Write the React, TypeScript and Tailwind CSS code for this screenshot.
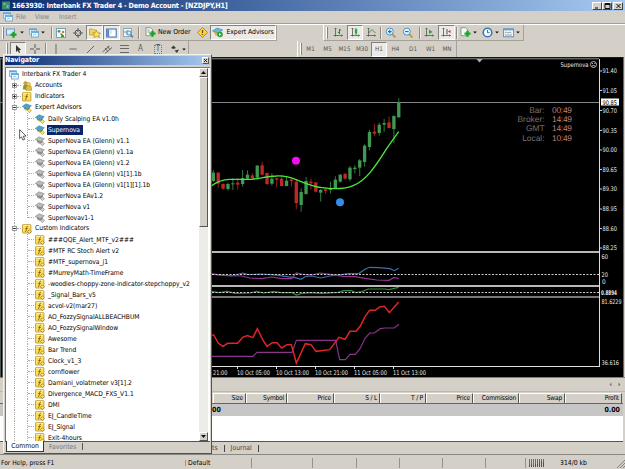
import type { ReactNode } from "react";

type TreeIcon = "app" | "accounts" | "indicator" | "expert" | "expertOff" | "custom";
type Candle = [high: number, top: number, bottom: number, low: number, up: 0 | 1];

const experts = [
  "Daily Scalping EA v1.0h",
  "Supernova",
  "SuperNova EA (Glenn) v1.1",
  "SuperNova EA (Glenn) v1.1a",
  "SuperNova EA (Glenn) v1.2",
  "SuperNova EA (Glenn) v1[1].1b",
  "SuperNova EA (Glenn) v1[1][1].1b",
  "SuperNova EAv1.2",
  "SuperNova v1",
  "SuperNovav1-1",
];

const customIndicators = [
  "###QQE_Alert_MTF_v2###",
  "#MTF RC Stoch Alert v2",
  "#MTF_supernova_j1",
  "#MurreyMath-TimeFrame",
  "-woodies-choppy-zone-indicator-stepchoppy_v2",
  "_Signal_Bars_v5",
  "acvol-v2(mar27)",
  "AO_FozzySignalALLBEACHBUM",
  "AO_FozzySignalWindow",
  "Awesome",
  "Bar Trend",
  "Clock_v1_3",
  "cornflower",
  "Damiani_volatmeter v3[1].2",
  "Divergence_MACD_FXS_V1.1",
  "DMI",
  "EJ_CandleTime",
  "EJ_Signal",
  "Exit-4hours",
];

// Three units per pixel, relative to the price pane.
const candles: Candle[] = [
  [240, 248, 273, 276, 1], [246, 248, 281, 294, 0], [280, 282, 296, 299, 0], [278, 282, 297, 302, 1],
  [264, 280, 283, 300, 1], [264, 278, 284, 299, 0], [240, 264, 282, 290, 1], [241, 254, 266, 270, 1],
  [249, 256, 264, 266, 0], [225, 227, 263, 265, 1], [215, 226, 254, 256, 0], [248, 249, 282, 286, 0],
  [250, 266, 281, 287, 1], [263, 265, 269, 292, 0], [254, 266, 288, 289, 0], [261, 272, 288, 289, 1],
  [263, 269, 273, 290, 0], [270, 275, 339, 358, 0], [295, 306, 345, 365, 1], [261, 273, 312, 314, 1],
  [266, 275, 280, 299, 0], [276, 277, 305, 307, 0], [297, 300, 308, 335, 1], [293, 298, 303, 312, 0],
  [275, 295, 300, 310, 1], [259, 269, 295, 296, 1], [253, 254, 275, 278, 1], [248, 252, 266, 269, 0],
  [228, 233, 268, 274, 1], [226, 233, 237, 250, 1], [207, 211, 233, 258, 1], [163, 167, 216, 230, 1],
  [119, 126, 171, 181, 1], [102, 125, 131, 138, 0], [98, 104, 129, 137, 1], [87, 99, 104, 126, 1],
  [80, 97, 114, 115, 0], [76, 78, 117, 160, 1], [25, 36, 82, 83, 1],
];

const prices: [string, number][] = [
  ["91.40", 70.5], ["91.05", 90], ["90.70", 110], ["90.35", 130], ["90.00", 149.5],
  ["89.65", 169], ["89.30", 188.5], ["88.95", 208.5], ["88.60", 228], ["88.25", 247.5],
];

const times: [string, number][] = [
  ["10 Oct 05:00", 237], ["10 Oct 13:00", 276], ["10 Oct 21:00", 315], ["11 Oct 05:00", 354], ["11 Oct 13:00", 393],
];

function Svg({ children, w = 10, h = 10 }: { children: ReactNode; w?: number; h?: number }) {
  return (
    <svg width={w} height={h} viewBox={`0 0 ${w} ${h}`} className="block shrink-0" fill="none">
      {children}
    </svg>
  );
}

function WindowsIcon() {
  return (
    <Svg>
      <rect x=".5" y=".8" width="7" height="5.5" fill="#e4f2fb" stroke="#6aa5cf" strokeWidth=".8" />
      <path d="M.5 1.5h7" stroke="#5ba3d8" strokeWidth="1.4" />
      <rect x="2.5" y="3.5" width="6.8" height="5.5" fill="#f4faff" stroke="#5f9ac6" strokeWidth=".8" />
      <path d="M2.5 4.3h6.8" stroke="#62aee0" strokeWidth="1.4" />
      <path d="M4 7h1l1-1 1 1.2" stroke="#6c9cba" strokeWidth=".6" />
    </Svg>
  );
}

function ExpertIcon({ off = false }: { off?: boolean }) {
  return (
    <Svg>
      <path d="M1.5 4.2l1.3 3 3.5.8 2-3.4z" fill={off ? "#a5a5a5" : "#e9c862"} />
      <path d="M.2 3.5L4 .8l5.4 2-3.8 2.8z" fill={off ? "#bcbcbc" : "#4da3c9"} stroke={off ? "#777" : "#2f7b9f"} strokeWidth=".5" />
      <path d="M1.8 5l3.5 1.4L8 4.5" stroke={off ? "#808080" : "#287aa1"} strokeWidth=".9" />
      <path d="M7.4 5.6l2 2-2 2-2-2z" fill={off ? "#d0d0d0" : "#ffe163"} stroke={off ? "#777" : "#a98916"} strokeWidth=".6" />
    </Svg>
  );
}

function FunctionIcon({ custom = false }: { custom?: boolean }) {
  return (
    <Svg>
      <rect x=".5" y=".6" width="8.4" height="8.4" rx=".5" fill="#fbdd58" stroke="#b59235" strokeWidth=".8" />
      <path d="M1.2 1.4h7" stroke="#fff3a6" />
      <path d="M6 2.3c-1.2-.3-1.3.5-1.4 1.3L4 6.8c-.1.7-.4.9-1 .7M3.4 4.5h2.4" stroke="#735016" strokeWidth=".8" />
      {custom && <path d="M7.4 5.7l1.9 1.9-1.9 1.9-1.9-1.9z" fill="#ffe26a" stroke="#92731c" strokeWidth=".7" />}
    </Svg>
  );
}

function AccountsIcon() {
  return (
    <Svg>
      <path d="M.8 8.5l.5-4 2.2-1 2 1 .6 4z" fill="#79a534" />
      <circle cx="3.5" cy="2.3" r="1.8" fill="#d0a93a" stroke="#8e7323" strokeWidth=".4" />
      <path d="M3.8 9.3l.4-4 2.4-1.1 2.5 1 .5 4.1z" fill="#e7bf32" stroke="#94751a" strokeWidth=".5" />
      <circle cx="6.6" cy="3.2" r="1.8" fill="#f4d464" stroke="#9c7d22" strokeWidth=".5" />
    </Svg>
  );
}

function RowIcon({ icon }: { icon: TreeIcon }) {
  if (icon === "app") return <WindowsIcon />;
  if (icon === "accounts") return <AccountsIcon />;
  if (icon === "expert" || icon === "expertOff") return <ExpertIcon off={icon === "expertOff"} />;
  return <FunctionIcon custom={icon === "custom"} />;
}

function Arrow() {
  return (
    <Svg w={4} h={3}>
      <path d="M.2.5h3.6L2 2.5z" fill="#111" />
    </Svg>
  );
}

function Grip() {
  return <span className="h-3 w-[2px] shrink-0 border-x border-l-white border-r-[#87847e] bg-[#99968f]" />;
}

function Separator() {
  return <span className="h-3 w-[2px] shrink-0 border-r border-l border-r-[#efede7] border-l-[#8c8982]" />;
}

// A fixed-width toolbar cell, optionally drawn as pushed in.
function Tool({ className, pressed = false, children }: { className: string; pressed?: boolean; children?: ReactNode }) {
  return (
    <span
      className={`flex h-[15px] shrink-0 items-center justify-center gap-[2px] border ${
        pressed ? "border-t-[#85827c] border-r-white border-b-white border-l-[#85827c] bg-[#eceae6]" : "border-transparent"
      } ${className}`}
    >
      {children}
    </span>
  );
}

function PlusMark() {
  return <path d="M4.5 6.7h6M7.5 3.7v6" stroke="#19a329" strokeWidth="2.3" />;
}

function Magnifier({ minus = false }: { minus?: boolean }) {
  return (
    <Svg w={12} h={12}>
      <path d="M7 7l3.5 3.5" stroke="#c39a3b" strokeWidth="2" />
      <circle cx="4.8" cy="4.6" r="3.5" fill="#e5f5ff" stroke="#4a91c5" />
      <path d={minus ? "M3 4.6h3.6" : "M3 4.6h3.6M4.8 2.8v3.6"} stroke="#2467a8" strokeWidth="1.1" />
    </Svg>
  );
}

function Axes({ children }: { children: ReactNode }) {
  return (
    <Svg w={11} h={11}>
      <path d="M2.5 1v8.5M.5 8.5h9M1.5 2l1-1 1 1M8.5 7.5l1 1-1 1" stroke="#555" strokeWidth=".8" />
      {children}
    </Svg>
  );
}

function MainToolbar() {
  return (
    <div className="flex h-4 items-stretch">
      <div className="flex w-[277px] items-center border-r border-b border-[#a5a29c] pl-[2px]">
        <Grip />
        <Tool className="w-[21px] gap-[1px]">
          <Svg w={12}>
            <rect x=".5" y="1" width="8" height="6" fill="#d8ecf8" stroke="#679bc3" />
            <PlusMark />
          </Svg>
          <Arrow />
        </Tool>
        <Tool className="w-[23px]">
          <WindowsIcon />
          <Arrow />
        </Tool>
        <span className="w-[3px]" />
        <Separator />
        <Tool className="w-[16px]">
          <Svg>
            <rect x=".5" y=".5" width="9" height="9" fill="#f9fcff" stroke="#7c9fbb" />
            <circle cx="3" cy="3.3" r="1.4" fill="#36a446" />
            <circle cx="7" cy="4" r="1.2" fill="#e26a59" />
            <path d="M4.5 5.5L7.5 8M5 8.3h3" stroke="#2e9c37" strokeWidth="1.4" />
          </Svg>
        </Tool>
        <Tool className="w-[17px]">
          <Svg>
            <circle cx="5" cy="5" r="3" stroke="#555" />
            <path d="M5 0v4M5 6v4M0 5h4M6 5h4" stroke="#555" strokeWidth=".9" />
          </Svg>
        </Tool>
        <Tool className="w-[17px]" pressed>
          <Svg w={12}>
            <path d="M.5 1h3l1 1h3v5h-7z" fill="#f5d45b" stroke="#b2902d" strokeWidth=".7" />
            <path d="M7.5 2.5L9 5h2.5L9.8 6.9l.6 2.6-2.8-1.1-2.7 1.1.4-2.8-1.6-1.9h2.5z" fill="#ffe367" stroke="#ad8519" strokeWidth=".7" />
          </Svg>
        </Tool>
        <Tool className="w-[17px]" pressed>
          <Svg w={11}>
            <rect x=".7" y="1" width="9.5" height="8" fill="#fff" stroke="#3469ad" />
            <path d="M2.2 1.5v7" stroke="#5283c4" strokeWidth="2" />
            <path d="M4.5 3h1M4.5 5h1" stroke="#777" strokeWidth=".7" />
          </Svg>
        </Tool>
        <Tool className="w-[17px]">
          <Svg w={11}>
            <path d="M.5.5h8v8h-8z" fill="#f3f7fa" stroke="#7898b3" strokeWidth=".8" />
            <path d="M2 5V3M4 7V2" stroke="#6e8ba0" />
            <circle cx="6" cy="5" r="2.1" fill="#d9effc" stroke="#4c8ab7" />
            <path d="M7.5 6.7L10 9.2" stroke="#477ba1" strokeWidth="1.4" />
          </Svg>
        </Tool>
        <span className="w-[1px]" />
        <Separator />
        <Tool className="w-[54px] justify-start pl-[4px]">
          <Svg w={11} h={11}>
            <path d="M1 .7h4.5l2 2v6H1z" fill="#f5fbf3" stroke="#708b71" strokeWidth=".8" />
            <path d="M2.5 3h2M2.5 5h3" stroke="#667" strokeWidth=".7" />
            <PlusMark />
          </Svg>
          <span className="text-[6.9px] tracking-[-.08px]">New Order</span>
        </Tool>
        <Tool className="w-[16px]">
          <Svg w={11} h={11}>
            <path d="M5.5.5l5 5-5 5-5-5z" fill="#ffd33d" stroke="#a7780d" strokeWidth=".8" />
            <path d="M5.5 3v3.2M5.5 7v1" stroke="#6c4b0c" strokeWidth="1.2" />
          </Svg>
        </Tool>
        <Tool className="w-[66px]" pressed>
          <Svg w={12} h={11}>
            <path d="M1.5 5l2 3.5 4 .5L10 5z" fill="#e6b544" />
            <path d="M.4 4L5 1l5.8 2-4.3 3z" fill="#68b9d8" stroke="#3686a8" strokeWidth=".6" />
            <circle cx="8" cy="7.5" r="2.8" fill="#20a43a" />
            <path d="M7.1 6l2.3 1.5L7.1 9z" fill="white" />
          </Svg>
          <span className="text-[6.9px] tracking-[-.1px]">Expert Advisors</span>
        </Tool>
      </div>
      <div className="ml-[46px] flex w-[201px] items-center border-x border-b border-[#a5a29c] border-l-white pl-[2px]">
        <Grip />
        <Tool className="ml-[2px] w-[17px]">
          <Axes><path d="M6.5 2v5M5 5.5h1.5M6.5 3h1.5" stroke="#238836" /></Axes>
        </Tool>
        <Tool className="w-[16px]" pressed>
          <Axes><path d="M6 1v7" stroke="#168e2a" strokeWidth=".8" /><path d="M6 2.2v4.3" stroke="#22ac39" strokeWidth="2.4" /></Axes>
        </Tool>
        <Tool className="w-[17px]">
          <Axes><path d="M3 6c1-2 2-3 3-3s2 1.5 3.4 3" stroke="#358b45" strokeWidth=".9" /></Axes>
        </Tool>
        <Separator />
        <Tool className="w-[17px]"><Magnifier /></Tool>
        <Tool className="w-[17px]"><Magnifier minus /></Tool>
        <span className="w-[3px]" />
        <Separator />
        <Tool className="w-[17px]">
          <Axes><path d="M5 2.5L8.5 5 5 7z" fill="#29a33b" /></Axes>
        </Tool>
        <Tool className="w-[17px]" pressed>
          <Axes><path d="M6 2v5.5" stroke="#555" /><path d="M9.5 3v3L7 4.5z" fill="#bd3930" /></Axes>
        </Tool>
        <span className="w-[1px]" />
        <Separator />
        <Tool className="w-[21px]">
          <Svg w={11} h={11}>
            <path d="M1 .7h4.5l2 2v6H1z" fill="#f5fbf3" stroke="#708b71" strokeWidth=".8" />
            <PlusMark />
          </Svg>
          <Arrow />
        </Tool>
        <Tool className="w-[22px]">
          <Svg w={11} h={11}>
            <circle cx="5.5" cy="5.5" r="4.3" fill="#f7fbff" stroke="#3179bd" strokeWidth="1.6" />
            <path d="M5.5 3v2.7H7.7" stroke="#345" strokeWidth=".8" />
          </Svg>
          <Arrow />
        </Tool>
        <Tool className="w-[21px]">
          <Svg w={11}>
            <rect x=".6" y=".8" width="10" height="8" fill="#f6fbff" stroke="#5c8fba" />
            <path d="M1 1.7h9" stroke="#65a0d1" strokeWidth="1.4" />
            <path d="M2 5l1.5-1L5 5l2-1 1.5 1M2 7h7" stroke="#71848f" strokeWidth=".8" />
          </Svg>
          <Arrow />
        </Tool>
      </div>
    </div>
  );
}

function LineToolbar() {
  const periods: [string, string][] = [
    ["M1", "w-[17px]"], ["M5", "w-[17px]"], ["M15", "w-[17px]"], ["M30", "w-[18px]"], ["H1", "w-[16px]"],
    ["H4", "w-[17px]"], ["D1", "w-[18px]"], ["W1", "w-[17px]"], ["MN", "w-[16px]"],
  ];
  const lines = [
    "M5 0v10",
    "M1.5 5h7",
    "M2 9l7-7",
    "M.5 8l7-6M3 9.5l7-6M3 4l3 4M5.5 2L8 6",
    "M1 1.5h9M1 4.5h9M1 8.5h9",
  ];
  return (
    <div className="flex h-4 items-stretch text-[6.3px] text-[#56544f]">
      <div className="flex w-[189px] items-center border-r border-[#a5a29c] pl-[6px]">
        <Grip />
        <Tool className="ml-[2px] w-[16px]" pressed>
          <Svg><path d="M3 1v7l1.8-1.5L6 9l1.1-.6-1-2.3 2.1-.2z" fill="#333" /></Svg>
        </Tool>
        <Tool className="w-[18px]">
          <Svg><path d="M5 0v4M5 6v4M0 5h4M6 5h4" stroke="#555" /></Svg>
        </Tool>
        <span className="w-[2px]" />
        <Separator />
        {lines.map((d) => (
          <Tool key={d} className="w-[17px]">
            <Svg><path d={d} stroke="#605e59" strokeWidth=".9" /></Svg>
          </Tool>
        ))}
        <Tool className="w-[17px]"><span className="text-[8px]">A</span></Tool>
        <Tool className="w-[18px]">
          <span className="flex h-[9px] w-[8px] items-center justify-center border border-dotted border-[#777] text-[8px]">T</span>
        </Tool>
        <Tool className="w-[21px]">
          <Svg>
            <path d="M1 4l2.5-2.5L6 4 3.5 5zM4.5 6.5L9 5.5 7 9z" fill="#3b3b3b" />
          </Svg>
          <Arrow />
        </Tool>
      </div>
      <div className="ml-[108px] flex w-[160px] items-center border-x border-[#a5a29c] border-l-white pl-[2px]">
        <Grip />
        {periods.map(([label, width]) => (
          <Tool key={label} className={width} pressed={label === "H1"}>
            {label}
          </Tool>
        ))}
      </div>
    </div>
  );
}

function Chart() {
  return (
    <svg width="625" height="321" viewBox="0 57 625 321" className="block shrink-0" fill="none">
      <rect y="57" width="625" height="321" fill="#d4d0c8" />
      <rect y="57" width="623.5" height="320" fill="#000" />
      <path d="M0 57h623.5" stroke="#33312e" strokeWidth="1" />
      <path d="M0 58.8h599" stroke="#8c918e" />
      <path d="M0 102.5h599.5" stroke="#83878a" />
      <path d="M599.5 59v308M205 366.5h395" stroke="#dedede" />
      <path d="M205 252h394" stroke="#b9b9b9" strokeWidth="2" />
      <path d="M205 286h394" stroke="#b9b9b9" strokeWidth="2" />
      <path d="M205 297h394" stroke="#777" strokeWidth="2" />
      <path d="M0 377.5h625" stroke="#807e79" strokeWidth="1.2" />
      <path d="M476.5 59h6l-3 3.5z" fill="#a6b6c0" />

      <g transform="translate(205 90) scale(.33333)">
        {candles.map(([high, top, bottom, low, up], i) => {
          const x = 25 + i * 14.64;
          const color = up ? "#3f9950" : "#c02828";
          return (
            <g key={i}>
              <path d={`M${x} ${high}V${low}`} stroke={color} strokeWidth="2.4" />
              <rect x={x - 5} y={top} width="10" height={bottom - top} fill={color} />
            </g>
          );
        })}
        <path
          d="M20 287C36 274 54 269 75 268H140C163 266 190 258 214 258C235 257 260 263 279 271C304 281 325 290 351 293C388 298 422 297 446 286C490 270 524 207 549 170L581 125"
          stroke="#4ce73c"
          strokeWidth="4"
        />
        <circle cx="273" cy="212" r="12" fill="#f20cf2" />
        <circle cx="405" cy="337" r="12" fill="#318fe8" />
      </g>

      {/* oscillator panes */}
      <g transform="translate(205 240) scale(.33333)">
        <path
          d="M20 103L50 105 80 108 113 99 130 104 165 102 200 104 220 106 245 110 270 113 288 118 303 109 320 108 347 114 375 108 400 105 430 101 462 100 480 88 494 82 520 83 555 86 568 92 581 85"
          stroke="#416fa9"
          strokeWidth="3.5"
        />
        <path
          d="M20 101L50 106 110 108 135 114 170 116 200 111 225 115 260 116 274 99 290 102 320 105 345 99 375 103 415 109 450 110 480 115 515 120 552 121 566 113 581 115"
          stroke="#953494"
          strokeWidth="3.5"
        />
        <path
          d="M20 154L40 158 68 154 90 160 135 159 155 154 175 159 205 155 230 158 262 158 274 165 290 160 315 158 350 160 400 157 415 152 440 152 452 158 470 155 490 147 540 147 552 149 581 142"
          stroke="#318d36"
          strokeWidth="3.5"
        />
        <path
          d="M20 349H144L156 337H261L274 301H392L404 359H421L435 343H451L465 326 480 295 494 279H508L526 266 540 264H568L582 253"
          stroke="#8a348c"
          strokeWidth="3.5"
        />
        <path
          d="M20 285H26L40 310 54 319 68 310H98L113 292 127 287 144 293 157 266 173 299 186 319 202 308H216L230 324 246 314H259L274 369 301 311 318 314 333 334 374 329 402 292 420 298 435 274H453L466 258 480 230 494 211H511L524 201 538 199 553 218 568 201 581 186"
          stroke="#df2525"
          strokeWidth="4.5"
        />
      </g>
      <path d="M212 274.5h387M212 292.5h387" stroke="#cfcfcf" strokeDasharray="2 1.5" />

      <g fill="#e7e7e7" fontSize="6.4" textRendering="geometricPrecision" className="font-['DejaVu_Sans_Condensed',sans-serif]">
        {prices.map(([label, y]) => (
          <g key={label}>
            <path d={`M600 ${y + 0.5}h2`} stroke="#ccc" />
            <text x="602.5" y={y + 2.7} textLength="14.5" lengthAdjust="spacingAndGlyphs">{label}</text>
          </g>
        ))}
        <rect x="601" y="98.5" width="18" height="7" fill="#fff" />
        <text x="602.5" y="104.5" textLength="14.5" lengthAdjust="spacingAndGlyphs" fill="#000">90.85</text>
        <text x="601.5" y="259" textLength="6.5" lengthAdjust="spacingAndGlyphs">60</text>
        <text x="601.5" y="276.5" textLength="6.5" lengthAdjust="spacingAndGlyphs">20</text>
        <text x="602" y="284">0</text>
        <text x="601" y="294.5" textLength="16" lengthAdjust="spacingAndGlyphs" fontWeight="bold">0.8894</text>
        <text x="601.5" y="304" textLength="20" lengthAdjust="spacingAndGlyphs">81.6229</text>
        <text x="601.5" y="365" textLength="17.5" lengthAdjust="spacingAndGlyphs">36.616</text>
        <text x="213" y="374.7" textLength="14.5" lengthAdjust="spacingAndGlyphs">21:00</text>
        {times.map(([label, x]) => (
          <g key={label}>
            <path d={`M${x + 0.5} 367v2`} stroke="#ddd" />
            <text x={x} y="374.7" textLength="33" lengthAdjust="spacingAndGlyphs">{label}</text>
          </g>
        ))}
        <text x="560.5" y="67" textLength="28" lengthAdjust="spacingAndGlyphs">Supernova</text>
      </g>
      <circle cx="593.5" cy="64.5" r="3" stroke="#ddd" strokeWidth=".8" />
      <path d="M592 63.5h1M594.3 63.5h1M592 66q1.5-1.3 3 0" stroke="#ddd" strokeWidth=".8" />
      <g fontSize="8.4" textRendering="geometricPrecision" className="font-['Liberation_Sans',sans-serif]">
        {([["Bar:", "00:49", 113], ["Broker:", "14:49", 122], ["GMT", "14:49", 131.3], ["Local:", "10:49", 140.5]] as [string, string, number][]).map(([name, time, y]) => (
          <g key={name}>
            <text x="544.5" y={y} textAnchor="end" fill="#77716f">{name}</text>
            <text x="552" y={y} textLength="20" fill="#bf817d">{time}</text>
          </g>
        ))}
      </g>
      <path d="M.5 58v319M2.5 58v319" stroke="#676d6e" strokeWidth=".8" />
    </svg>
  );
}

function Branch({ label, icon, expanded }: { label: string; icon: TreeIcon; expanded: boolean }) {
  return (
    <div className="flex h-[11px] shrink-0 items-center">
      <span className="ml-[6px] flex h-full w-[5px] shrink-0 flex-col items-center">
        <span className="w-0 flex-1 border-l border-dotted border-[#aaa]" />
        <Svg w={5} h={5}>
          <rect x=".5" y=".5" width="4" height="4" fill="#fff" stroke="#888" strokeWidth=".8" />
          <path d={expanded ? "M1.2 2.5h2.6" : "M1.2 2.5h2.6M2.5 1.2v2.6"} stroke="#111" strokeWidth=".9" />
        </Svg>
        <span className="w-0 flex-1 border-l border-dotted border-[#aaa]" />
      </span>
      <span className="mr-[1px] w-[4px] border-t border-dotted border-[#aaa]" />
      <RowIcon icon={icon} />
      <span className="ml-[3px]">{label}</span>
    </div>
  );
}

function Leaf({ label, icon, last = false }: { label: string; icon: TreeIcon; last?: boolean }) {
  return (
    <div className="flex h-[11px] shrink-0 items-center">
      <span className="h-full w-[9px] shrink-0 border-r border-dotted border-[#aaa]" />
      <span className={`w-[13px] shrink-0 border-r border-dotted border-[#aaa] ${last ? "h-[6px] self-start" : "h-full"}`} />
      <span className="mr-[1px] w-[6px] shrink-0 border-t border-dotted border-[#aaa]" />
      <RowIcon icon={icon} />
      <span className={`ml-[2px] px-[1px] leading-[10px] ${label === "Supernova" ? "bg-[#0a246a] pr-[3px] text-white" : ""}`}>{label}</span>
    </div>
  );
}

function ScrollButton({ down = false }: { down?: boolean }) {
  return (
    <span className="flex h-[9px] w-[9px] shrink-0 items-center justify-center border border-t-white border-r-[#555] border-b-[#555] border-l-white bg-[#d4d0c8]">
      <Svg w={5} h={3}><path d={down ? "M0 0h5L2.5 3z" : "M0 3h5L2.5 0z"} fill="#111" /></Svg>
    </span>
  );
}

function Navigator() {
  return (
    <section className="absolute top-[54px] left-[3px] flex h-[400px] w-[209px] flex-col border border-t-[#f3f1ec] border-r-[#54524e] border-b-[#54524e] border-l-[#f3f1ec] bg-[#d4d0c8] px-[1px] pt-[1px]">
      <header className="flex h-[9px] shrink-0 items-center justify-between bg-linear-to-r from-[#0b2b70] to-[#a6caf0] pr-[1px] text-[7px] font-bold text-white">
        <span className="tracking-[-.1px]">Navigator</span>
        <span className="flex h-[7px] w-[7px] items-center justify-center border border-t-white border-r-[#555] border-b-[#555] border-l-white bg-[#d4d0c8]">
          <Svg w={5} h={5}><path d="M1 1l3 3M4 1L1 4" stroke="#111" strokeWidth=".9" /></Svg>
        </span>
      </header>
      <div className="mt-[2px] flex h-[374px] shrink-0 overflow-hidden border-t border-l border-[#777] bg-white">
        <div className="flex min-w-0 flex-1 flex-col overflow-hidden pt-[1px] text-[6.7px] leading-[11px] tracking-[-.03px] whitespace-nowrap">
          <div className="flex h-[11px] shrink-0 items-center pl-[3px]">
            <WindowsIcon />
            <span className="ml-[3px]">Interbank FX Trader 4</span>
          </div>
          <Branch label="Accounts" icon="accounts" expanded={false} />
          <Branch label="Indicators" icon="indicator" expanded={false} />
          <Branch label="Expert Advisors" icon="expert" expanded />
          {experts.map((name, i) => (
            <Leaf key={name} label={name} icon={i < 2 ? "expert" : "expertOff"} last={i === experts.length - 1} />
          ))}
          <Branch label="Custom Indicators" icon="custom" expanded />
          {customIndicators.map((name) => (
            <Leaf key={name} label={name} icon="custom" />
          ))}
        </div>
        <div className="mr-[2px] flex w-[9px] shrink-0 flex-col bg-[#eeece8]">
          <ScrollButton />
          <span className="h-[150px] border border-t-white border-r-[#555] border-b-[#555] border-l-white bg-[#d4d0c8]" />
          <span className="flex-1" />
          <ScrollButton down />
        </div>
      </div>
      <div className="flex h-[11px] items-start border-t border-[#555] pl-[1px] text-[6.8px] leading-[10px] text-[#777]">
        <span className="-mt-[1px] h-[11px] w-[38px] border border-t-0 border-[#333] bg-white text-center text-black">Common</span>
        <span className="ml-[5px]">Favorites</span>
        <span className="mt-[1px] ml-[5px] h-[7px] border-l border-[#555]" />
      </div>
    </section>
  );
}

function Terminal() {
  const columns: [string, string][] = [
    ["Size", "w-[33px]"], ["Symbol", "w-[41px]"], ["Price", "w-[47px]"], ["S / L", "w-[46px]"], ["T / P", "w-[46px]"],
    ["Price", "w-[47px]"], ["Commission", "w-[46px]"], ["Swap", "w-[46px]"], ["Profit", "w-[57px]"],
  ];
  return (
    <section className="flex h-[76px] shrink-0 flex-col">
      <div className="flex h-[14px] shrink-0 items-center justify-end gap-[6px] border-b border-[#bbb8b0] pr-[4px]">
        <Svg w={3} h={5}><path d="M2.5.5v4L.5 2.5z" fill="#777" /></Svg>
        <Svg w={3} h={5}><path d="M.5.5v4L2.5 2.5z" fill="#777" /></Svg>
      </div>
      <div className="mt-[1px] mr-[2px] flex h-[11px] shrink-0 border-b border-[#666] pl-[213px]">
        {columns.map(([label, width], i) => (
          <span
            key={i}
            className={`flex shrink-0 items-center justify-end border border-t-white border-r-[#555] border-b-0 border-l-white pr-[2px] text-[6.6px] tracking-[-.2px] ${width}`}
          >
            {label}
          </span>
        ))}
      </div>
      <div className="mr-[2px] flex h-[12px] shrink-0 items-center justify-between bg-[#c6c6c6] pr-[3px] pl-[212px] text-[7px] font-bold">
        <span>00</span>
        <span>0.00</span>
      </div>
      <div className="mr-[2px] h-[25px] shrink-0 bg-white" />
      <div className="mr-[2px] flex h-[13px] shrink-0 items-center gap-[6px] border-t border-[#555] pl-[212px] text-[6.8px] text-[#444]">
        <span>ts</span>
        <span className="h-[7px] border-l border-[#444]" />
        <span>Journal</span>
        <span className="h-[7px] border-l border-[#444]" />
      </div>
    </section>
  );
}

function StatusBar() {
  const cells = ["w-[61px]", "w-[44px]", "w-[43px]", "w-[43px]", "w-[43px]", "w-[40px]"];
  return (
    <footer className="flex h-[15px] shrink-0 items-center border-t border-[#8a8882] pt-[2px] text-[6.8px]">
      <span className="w-[185px] pl-[1px] text-[6.6px]">For Help, press F1</span>
      <span className="w-[66px] border-l border-[#96938d] pl-[2px]">Default</span>
      {cells.map((width, i) => (
        <span key={i} className={`h-[10px] shrink-0 border-l border-[#96938d] ${width}`} />
      ))}
      <span className="flex h-[10px] flex-1 items-center border-l border-[#96938d] pl-[3px]">
        <Svg w={16} h={8}>
          <path d="M.5 0v8M2.5 0v8M4.5 0v8M6.5 0v8M8.5 0v8M10.5 0v8M12.5 0v8M14.5 0v8" stroke="#568624" />
          <path d="M.5 6v2M2.5 5v3M4.5 6v2M6.5 5v3M8.5 5v3M10.5 3v5M12.5 2v6M14.5 3v5" stroke="#b12a20" />
        </Svg>
        <span className="ml-[15px]">314/0 kb</span>
        <span className="flex-1" />
        <Svg w={8} h={9}><path d="M0 9l8-8M3 9l5-5M6 9l2-2" stroke="#858279" /></Svg>
      </span>
    </footer>
  );
}

function WindowButton({ d }: { d: string }) {
  return (
    <span className="flex h-[8px] w-[10px] items-center justify-center border border-t-white border-r-[#444] border-b-[#444] border-l-white bg-[#d4d0c8]">
      <Svg w={7} h={6}><path d={d} stroke="#111" /></Svg>
    </span>
  );
}

export default function App() {
  return (
    <main className="relative flex h-[469px] w-[625px] flex-col overflow-hidden bg-[#d4d0c8] font-['DejaVu_Sans_Condensed','DejaVu_Sans',sans-serif] text-[7px] leading-none whitespace-nowrap text-black">
      <header className="flex h-[11px] shrink-0 items-center bg-linear-to-r from-[#0c2b70] to-[#a6caf0] pr-[2px] pl-[2px] text-white">
        <Svg w={8} h={9}>
          <rect y=".5" width="8" height="8" fill="#398c6e" />
          <path d="M1.5 2h2v2h-2zM4.5 4h2v3h-2z" fill="#6dc093" />
        </Svg>
        <h1 className="ml-[2px] flex-1 text-[7.2px] font-bold tracking-[-.2px]">1663930: Interbank FX Trader 4 - Demo Account - [NZDJPY,H1]</h1>
        <WindowButton d="M1 5h3" />
        <WindowButton d="M1 .5h5v5h-5zM1 1.5h5" />
        <span className="w-[1px]" />
        <WindowButton d="M1.5 1l4 4M5.5 1l-4 4" />
      </header>
      <nav className="flex h-[13px] shrink-0 items-center border-b border-[#a19e97] pl-[3px] text-[6.7px] text-[#85827c]">
        <WindowsIcon />
        <span className="ml-[3px] w-[19px]">File</span>
        <span className="w-[24px]">View</span>
        <span>Insert</span>
      </nav>
      <div className="flex h-[33px] shrink-0 flex-col border-t border-white">
        <MainToolbar />
        <LineToolbar />
      </div>
      <Chart />
      <Terminal />
      <StatusBar />
      <Navigator />
      <svg width="8" height="12" viewBox="0 0 8 12" className="absolute top-[129px] left-[19px]">
        <path d="M.6.6v9l2-1.7 1.4 3.2 1.7-.8-1.4-3.1 2.8-.2z" fill="#fff" stroke="#333" strokeWidth=".8" />
      </svg>
    </main>
  );
}
